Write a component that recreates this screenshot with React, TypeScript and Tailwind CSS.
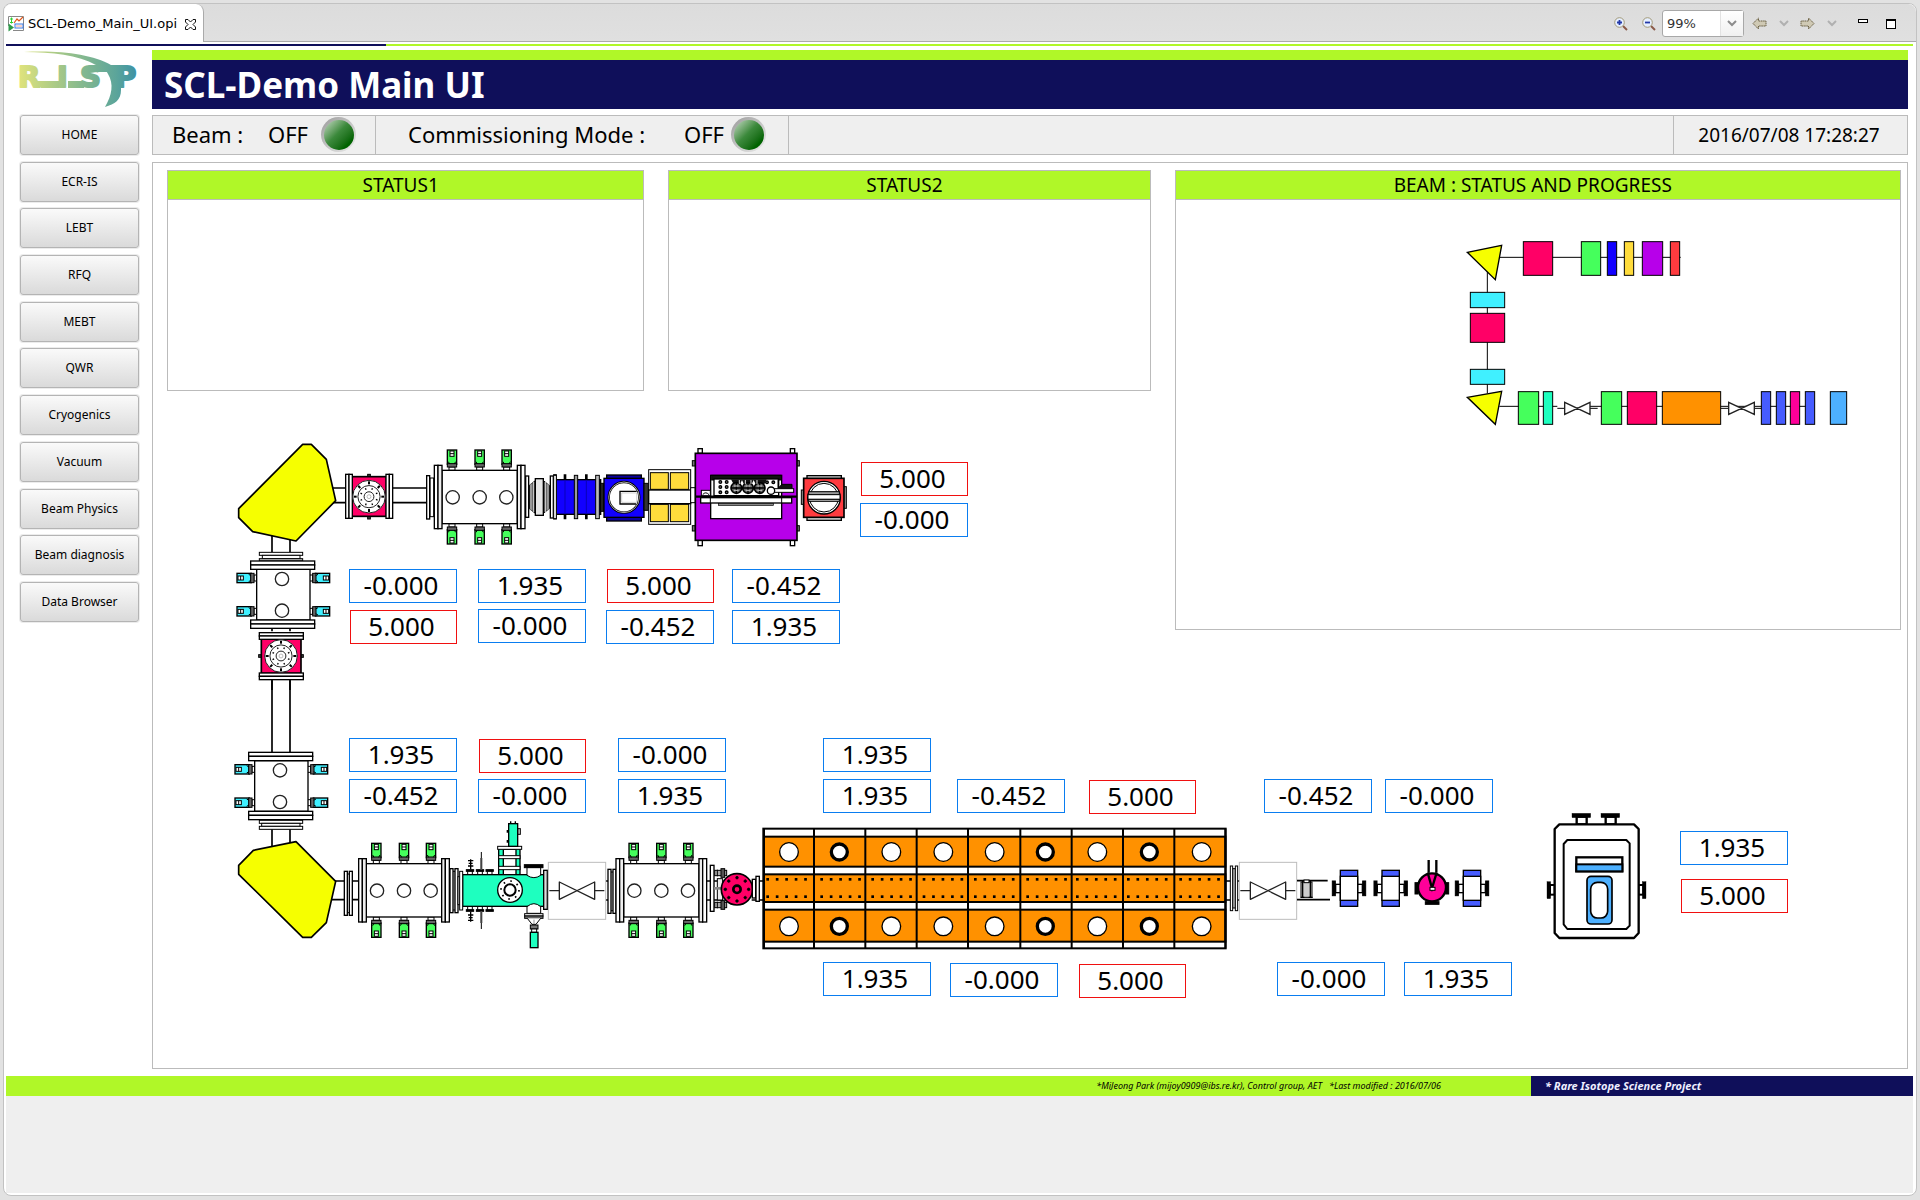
import React from "react";

const NAV = [
  "HOME",
  "ECR-IS",
  "LEBT",
  "RFQ",
  "MEBT",
  "QWR",
  "Cryogenics",
  "Vacuum",
  "Beam Physics",
  "Beam diagnosis",
  "Data Browser",
];

/* Origin of the synoptic drawing inside the page canvas */
const ORIGIN = { x: 167, y: 391 };

type Reading = { x: number; y: number; value: string; alarm?: boolean };

const READINGS: Reading[] = [
  { x: 861, y: 462, value: "5.000", alarm: true },
  { x: 860, y: 503, value: "-0.000" },
  { x: 349, y: 569, value: "-0.000" },
  { x: 478, y: 569, value: "1.935" },
  { x: 607, y: 569, value: "5.000", alarm: true },
  { x: 732, y: 569, value: "-0.452" },
  { x: 350, y: 610, value: "5.000", alarm: true },
  { x: 478, y: 609, value: "-0.000" },
  { x: 606, y: 610, value: "-0.452" },
  { x: 732, y: 610, value: "1.935" },
  { x: 349, y: 738, value: "1.935" },
  { x: 479, y: 739, value: "5.000", alarm: true },
  { x: 618, y: 738, value: "-0.000" },
  { x: 823, y: 738, value: "1.935" },
  { x: 349, y: 779, value: "-0.452" },
  { x: 478, y: 779, value: "-0.000" },
  { x: 618, y: 779, value: "1.935" },
  { x: 823, y: 779, value: "1.935" },
  { x: 957, y: 779, value: "-0.452" },
  { x: 1089, y: 780, value: "5.000", alarm: true },
  { x: 1264, y: 779, value: "-0.452" },
  { x: 1385, y: 779, value: "-0.000" },
  { x: 1680, y: 831, value: "1.935" },
  { x: 1681, y: 879, value: "5.000", alarm: true },
  { x: 823, y: 962, value: "1.935" },
  { x: 950, y: 963, value: "-0.000" },
  { x: 1079, y: 964, value: "5.000", alarm: true },
  { x: 1277, y: 962, value: "-0.000" },
  { x: 1404, y: 962, value: "1.935" },
];

/* ---------- drawing helpers: boxes are given by their two corners ---------- */

function Box({ p, f = "#fff", s = 3, c = "#000", r = 0 }: { p: number[]; f?: string; s?: number; c?: string; r?: number }) {
  return <rect x={p[0]} y={p[1]} width={p[2] - p[0]} height={p[3] - p[1]} fill={f} stroke={c} strokeWidth={s} rx={r} />;
}

function Sector({ x, y, children }: { x: number; y: number; children: React.ReactNode }) {
  return (
    <g transform={`translate(${x} ${y}) scale(0.33333)`} stroke="#000" strokeWidth={3}>
      {children}
    </g>
  );
}

function Motor({ x, y, angle, color }: { x: number; y: number; angle: number; color: string }) {
  return (
    <g transform={`translate(${x} ${y}) rotate(${angle})`}>
      <Box p={[-9, -10, 9, 0]} />
      <Box p={[-14, -61, 14, -18]} f={color} s={4} />
      <Box p={[-14, -20, 14, -10]} f="#666" />
      <path d="M-11 -26L-7 -19M11 -26L7 -19" />
      <Box p={[-6, -58, 6, -42]} s={3} />
      <path d="M-6 -50H6" />
    </g>
  );
}

function Chamber({ x, y }: { x: number; y: number }) {
  return (
    <g transform={`translate(${x} ${y})`}>
      {[-83, 0, 81].map((dx) => (
        <g key={dx}>
          <Motor x={dx} y={-80} angle={0} color="#45ff5c" />
          <Motor x={dx} y={80} angle={180} color="#45ff5c" />
        </g>
      ))}
      <Box p={[-113, -80, 113, 80]} s={4} />
      <Box p={[-136, -95, -125, 95]} s={4} />
      <Box p={[-125, -95, -113, 95]} f="#eee" s={4} />
      <Box p={[113, -95, 124, 95]} f="#eee" s={4} />
      <Box p={[124, -95, 136, 95]} s={4} />
      {[-81, 0, 80].map((dx) => (
        <circle key={dx} cx={dx} cy={1} r={20} fill="#fff" stroke="#222" strokeWidth={4} />
      ))}
    </g>
  );
}

function VerticalChamber({ x, y }: { x: number; y: number }) {
  return (
    <g transform={`translate(${x} ${y})`}>
      {[-50, 50].map((dy) => (
        <g key={dy}>
          <Motor x={-78} y={dy} angle={-90} color="#40f0ff" />
          <Motor x={78} y={dy} angle={90} color="#40f0ff" />
        </g>
      ))}
      <Box p={[-80, -76, 80, 76]} s={4} />
      <Box p={[-98, -101, 94, -89]} s={4} />
      <Box p={[-98, -89, 94, -76]} s={4} />
      <Box p={[-98, 76, 94, 88]} s={4} />
      <Box p={[-98, 88, 94, 101]} s={4} />
      <circle cx={-4} cy={-47} r={20} fill="#fff" stroke="#222" strokeWidth={4} />
      <circle cx={-4} cy={48} r={20} fill="#fff" stroke="#222" strokeWidth={4} />
    </g>
  );
}

function Dial({ r }: { r: number }) {
  return (
    <g>
      <circle r={r} fill="#fff" stroke="#222" strokeWidth={3} />
      <circle r={r * 0.68} fill="none" stroke="#222" strokeWidth={3} />
      <circle r={r * 0.3} fill="none" stroke="#222" strokeWidth={3} />
      <circle r={r * 0.12} fill="none" stroke="#999" strokeWidth={2} />
      {[0, 45, 90, 135, 180, 225, 270, 315].map((a) => (
        <g key={a} transform={`rotate(${a})`}>
          <path d={`M0 ${-r + 3}V${-r + 12}`} strokeWidth={6} />
          <path d={`M0 ${-r * 0.5 - 3}v5`} strokeWidth={4} transform="rotate(22)" />
        </g>
      ))}
    </g>
  );
}

function RedValve({ x, y, angle }: { x: number; y: number; angle: number }) {
  return (
    <g transform={`translate(${x} ${y}) rotate(${angle})`}>
      <Box p={[-4, -67, 4, 67]} f="#444" />
      <Box p={[-52, -60, 52, 59]} f="#ff0066" s={5} />
      <Box p={[-70, -67, -60, 65]} s={4} />
      <Box p={[-60, -67, -50, 65]} s={4} />
      <Box p={[51, -67, 61, 65]} s={4} />
      <Box p={[61, -67, 71, 65]} s={4} />
      <Dial r={49} />
    </g>
  );
}

function GateValve({ x, y }: { x: number; y: number }) {
  return (
    <g transform={`translate(${x} ${y})`}>
      <Box p={[-86, -85, 86, 86]} c="#bdbdbd" />
      <path d="M-83 0H-53M53 0H82M-53 -26V26L53 -26V26Z" fill="#fff" stroke="#222" strokeWidth={4} strokeLinejoin="round" />
    </g>
  );
}

function SmallFlange({ x, y }: { x: number; y: number }) {
  return (
    <g transform={`translate(${x} ${y})`}>
      <Box p={[-4, -58, 4, 58]} />
      <Box p={[-12, -66, -3, 66]} s={4} />
      <Box p={[3, -66, 12, 66]} s={4} />
    </g>
  );
}

function Quadrupole({ x }: { x: number }) {
  return (
    <g transform={`translate(${x} 295)`}>
      <Box p={[-50, -22, -41, 22]} f="#000" />
      <Box p={[41, -22, 50, 22]} f="#000" />
      <Box p={[-40, -12, 40, 13]} s={4} />
      <Box p={[-26, -54, 26, 54]} f="#465cff" s={4} />
      <Box p={[-26, -36, 26, 36]} s={4} />
    </g>
  );
}

function DriftModule() {
  const walls = [72, 222, 376, 530, 684, 841, 995, 1149, 1303, 1456];
  const holes = [147, 298, 454, 610, 764, 916, 1072, 1228, 1385];
  const rivets = [83, 245, 398, 552, 706, 863, 1012, 1165, 1322];
  return (
    <g>
      <Box p={[70, 86, 1457, 445]} s={6} />
      <Box p={[72, 110, 1456, 200]} f="#ff9100" s={6} />
      <Box p={[72, 223, 1456, 306]} f="#ff9100" s={6} />
      <Box p={[72, 329, 1456, 425]} f="#ff9100" s={6} />
      {walls.map((x) => (
        <path key={x} d={`M${x} 86V445`} strokeWidth={6} />
      ))}
      {holes.map((x, i) => {
        const thick = i === 1 || i === 5 || i === 7;
        return [156, 379].map((y) => (
          <circle key={`${x}-${y}`} cx={x} cy={y} r={thick ? 24 : 28} fill="#fff" strokeWidth={thick ? 10 : 4} />
        ));
      })}
      {rivets.map((x) =>
        [0, 1, 2, 3, 4].map((n) =>
          [234, 286].map((y) => (
            <rect key={`${x}-${n}-${y}`} x={x - 4 + n * 28.4} y={y} width={8} height={8} fill="#000" stroke="none" />
          )),
        ),
      )}
    </g>
  );
}

function Feedthroughs() {
  return (
    <g>
      {[750, 780, 809].map((x) => (
        <g key={x}>
          <Box p={[x - 7, 572, x + 7, 584]} />
          <Box p={[x - 11, 569, x + 11, 574]} f="#000" />
        </g>
      ))}
      <path d="M752 538V568M744 542H760M746 550H758M744 558H760" strokeWidth={4} />
      <path d="M784 516V570" strokeWidth={3} />
      <path d="M784 534V570" strokeWidth={6} stroke="#444" />
    </g>
  );
}

function Synoptic() {
  return (
    <svg className="block h-[670px] w-[1734px]" viewBox="167 391 1734 670" fill="none" aria-label="Beamline layout">
      {/* upper beamline: bend, valve, diagnostic chamber */}
      <Sector x={220} y={430}>
        <path d="M335 174H378M335 218H378M518 174H620M518 218H620M156 315V367M210 315V367M156 593V604M210 593V604M156 751V780M210 751V780" strokeWidth={5} />
        <path d="M248 43H274L319 88L347 212L228 333L98 305L56 263V236Z" fill="#f6ff00" strokeWidth={5} strokeLinejoin="round" />
        <RedValve x={447} y={200} angle={0} />
        <Box p={[630, 144, 641, 260]} />
        <Box p={[620, 137, 629, 267]} s={4} />
        <Chamber x={779} y={201} />
        <Box p={[917, 138, 926, 262]} s={4} />
        <path d="M928 166L946 152V250L928 236ZM988 166L970 152V250L988 236Z" fill="#555" />
        <path d="M933 160V242M940 156V246M977 156V246M984 160V242" stroke="#ddd" />
        <Box p={[946, 146, 970, 256]} f="#e6e6e6" s={4} />
        <Box p={[991, 138, 1000, 264]} s={4} />
        <Box p={[1001, 134, 1009, 267]} f="#999" />
        <Box p={[118, 367, 248, 376]} />
        <Box p={[127, 376, 240, 386]} />
        <Box p={[118, 386, 248, 393]} f="#bbb" />
        <VerticalChamber x={190} y={494} />
        <RedValve x={183} y={678} angle={90} />
      </Sector>

      {/* ion source side */}
      <Sector x={540} y={430}>
        <path d="M75 133V268M139 133V268" strokeWidth={8} />
        <Box p={[49, 149, 182, 253]} f="#1200ff" s={4} />
        <path d="M75 151V251M139 151V251" strokeWidth={3} stroke="#0a00b8" />
        <Box p={[41, 136, 49, 266]} />
        <Box p={[103, 136, 113, 266]} f="#999" />
        <Box p={[167, 136, 178, 266]} f="#bbb" />
        <Box p={[181, 160, 192, 244]} f="#222" />
        <Box p={[200, 135, 304, 273]} f="#0a00a0" s={4} />
        <Box p={[192, 145, 312, 262]} f="#1200ff" s={4} />
        <circle cx={252} cy={202} r={46} fill="#fff" strokeWidth={7} />
        <circle cx={252} cy={202} r={46} stroke="#aaa" strokeWidth={3} />
        <path d="M290 184H240V222H288" strokeWidth={4} />
        <path d="M245 189H290V217H245Z" stroke="#bbb" strokeWidth={2} />
        <Box p={[312, 160, 325, 241]} f="#333" />
        <Box p={[326, 119, 452, 283]} />
        <Box p={[331, 128, 385, 178]} f="#ffdc3c" />
        <Box p={[391, 128, 446, 178]} f="#ffdc3c" />
        <Box p={[331, 223, 385, 275]} f="#ffdc3c" />
        <Box p={[391, 223, 446, 275]} f="#ffdc3c" />
        <Box p={[326, 180, 452, 221]} s={4} />
        <Box p={[452, 173, 466, 218]} />
        {[474, 751].map((x) => (
          <g key={x}>
            <Box p={[x, 56, x + 13, 70]} s={4} />
            <Box p={[x, 331, x + 13, 347]} s={4} />
          </g>
        ))}
        {[457, 769].map((x) => (
          <g key={x}>
            <Box p={[x, 92, x + 9, 108]} f="#777" />
            <Box p={[x, 287, x + 9, 303]} f="#777" />
          </g>
        ))}
        <Box p={[466, 70, 771, 331]} f="#b700ea" s={5} />
        <Box p={[512, 136, 725, 266]} s={4} />
        <Box p={[515, 136, 722, 150]} f="#111" />
        <Box p={[522, 147, 716, 197]} s={4} />
        <path d="M573 148H680L672 165H648L641 150L634 165H613L606 150L599 165H582Z" fill="#111" stroke="none" />
        {[589, 624, 659].map((x) => (
          <g key={x}>
            <circle cx={x} cy={174} r={16} fill="#666" strokeWidth={5} />
            <path d={`M${x - 16} 174H${x + 16}M${x} 156V190`} strokeWidth={4} />
            <path d={`M${x - 7} 168h14M${x - 7} 181h14`} stroke="#ccc" strokeWidth={3} />
          </g>
        ))}
        <path d="M598 150V162M616 150V162M633 150V162M651 150V162" stroke="#ddd" />
        {[541, 560].map((x) => [156, 171, 187].map((y) => <circle key={`${x}${y}`} cx={x} cy={y} r={4} fill="#777" strokeWidth={4} />))}
        {[681, 700].map((x) => (
          <circle key={x} cx={x} cy={157} r={4} fill="#777" strokeWidth={4} />
        ))}
        <path d="M714 148V175L726 163H756V176H714" fill="#111" />
        <path d="M466 200H771" strokeWidth={7} />
        <Box p={[484, 181, 511, 197]} />
        <path d="M488 194Q497 183 507 194" />
        <Box p={[703, 176, 761, 187]} />
        <circle cx={693} cy={182} r={11} fill="#fff" strokeWidth={4} />
        <Box p={[482, 203, 755, 219]} s={4} />
        <path d="M511 203V219M725 203V219" />
        <Box p={[535, 220, 700, 226]} f="#888" s={2} />
        <Box p={[784, 180, 793, 223]} f="#999" />
        <Box p={[909, 170, 919, 235]} f="#999" />
        <Box p={[801, 137, 904, 271]} f="#ddd" s={4} />
        <Box p={[791, 145, 912, 262]} f="#ff3b3f" s={5} />
        <circle cx={852} cy={203} r={49} fill="#fff" strokeWidth={4} />
        <circle cx={852} cy={203} r={43} strokeWidth={3} />
        <Box p={[806, 185, 898, 194]} f="#999" />
        <Box p={[804, 194, 900, 208]} />
        <Box p={[806, 208, 898, 214]} f="#bbb" />
      </Sector>

      {/* lower-left return and stripper chamber */}
      <Sector x={220} y={680}>
        <path d="M156 0V216M210 0V216M156 448V500M210 448V500M334 603H417M334 659H417" strokeWidth={5} />
        <VerticalChamber x={184} y={318} />
        <Box p={[118, 421, 248, 430]} />
        <Box p={[125, 430, 240, 439]} />
        <Box p={[118, 439, 248, 448]} />
        <path d="M228 485L347 604L319 728L274 772H248L56 583V556L100 511Z" fill="#f6ff00" strokeWidth={5} strokeLinejoin="round" />
        <SmallFlange x={385} y={640} />
        <Chamber x={552} y={631} />
        <SmallFlange x={702} y={632} />
        <Box p={[714, 590, 720, 674]} />
        <Box p={[836, 506, 900, 584]} f="#1effbf" s={4} />
        <Box p={[850, 508, 888, 584]} s={4} />
        <Box p={[836, 527, 900, 536]} s={3} />
        <Box p={[836, 559, 900, 569]} s={3} />
        <Box p={[833, 499, 905, 508]} />
        <Box p={[893, 446, 901, 463]} f="#ccc" />
        <Box p={[866, 431, 893, 499]} f="#1effbf" s={4} />
        <path d="M872 424V431M886 424V431M862 450V458M862 480V488" strokeWidth={4} />
        <Feedthroughs />
        <g transform="translate(0 1263) scale(1 -1)">
          <Feedthroughs />
        </g>
        <Box p={[728, 584, 972, 679]} f="#1effbf" s={4} />
        <path d="M921 562H962V586Q942 600 921 586Z" fill="#fff" />
        <Box p={[913, 554, 969, 563]} f="#000" />
        <path d="M921 700V680Q942 662 962 680V700Z" fill="#fff" />
        <Box p={[914, 701, 969, 708]} />
        <Box p={[914, 708, 969, 715]} f="#777" />
        <path d="M922 715L936 733H948L962 715" fill="#fff" />
        <path d="M942 719V733" stroke="#999" />
        <Box p={[931, 735, 954, 747]} f="#777" />
        <Box p={[935, 747, 950, 757]} />
        <Box p={[931, 757, 954, 803]} f="#1effbf" s={4} />
        <Box p={[719, 574, 728, 690]} />
        <Box p={[971, 571, 982, 688]} f="#ddd" s={4} />
        <circle cx={870} cy={630} r={37} fill="#fff" strokeWidth={4} />
        <circle cx={870} cy={630} r={17} strokeWidth={6} />
        <circle cx={870} cy={630} r={27} strokeWidth={5} strokeDasharray="5 16.2" />
      </Sector>

      {/* gate valve, chamber and pump before the linac */}
      <Sector x={440} y={800}>
        <path d="M497 243H505M497 300H505M800 243H850M800 300H850M935 243H970M935 300H970" strokeWidth={5} />
        <GateValve x={411} y={272} />
        <SmallFlange x={516} y={274} />
        <Chamber x={664} y={271} />
        <Box p={[811, 196, 822, 334]} s={4} />
        {[219, 315].map((y) => (
          <g key={y}>
            <Box p={[824, y - 8, 860, y + 8]} f="#aaa" />
            <Box p={[843, y - 13, 854, y + 13]} f="#555" />
            <path d={`M832 ${y - 10}V${y + 10}`} />
          </g>
        ))}
        <Box p={[832, 236, 848, 300]} f="#eee" />
        <path d="M822 265H850" strokeWidth={8} stroke="#888" />
        <circle cx={891} cy={268} r={47} fill="#ff0066" strokeWidth={5} />
        {[0, 45, 90, 135, 180, 225, 270, 315].map((a) => (
          <circle key={a} cx={891} cy={233} r={4} fill="#000" stroke="#000" strokeWidth={2} transform={`rotate(${a} 891 268)`} />
        ))}
        <circle cx={891} cy={268} r={11} strokeWidth={8} />
        <Box p={[937, 238, 947, 294]} s={4} />
        <Box p={[948, 229, 958, 304]} s={4} />
      </Sector>

      {/* superconducting linac modules */}
      <Sector x={740} y={800}>
        <path d="M1458 243H1500M1458 300H1500" strokeWidth={5} />
        <DriftModule />
        <Box p={[1477, 206, 1488, 324]} f="#aaa" />
        <Box p={[1471, 198, 1478, 332]} />
        <Box p={[1486, 198, 1493, 332]} />
      </Sector>

      {/* downstream optics */}
      <Sector x={1220} y={790}>
        <GateValve x={144} y={302} />
        <path d="M231 272H323M231 329H330" strokeWidth={5} />
        <Box p={[243, 276, 276, 322]} f="#ccc" />
        <path d="M248 272V324M271 272V324M242 322H253M266 322H278" strokeWidth={4} />
        <Box p={[252, 270, 267, 278]} />
        <Quadrupole x={387} />
        <Quadrupole x={512} />
        <Quadrupole x={756} />
        <Box p={[585, 278, 594, 312]} f="#000" />
        <Box p={[677, 278, 686, 312]} f="#000" />
        <Box p={[616, 335, 657, 343]} f="#000" />
        <circle cx={636} cy={292} r={42} fill="#ff0099" strokeWidth={7} />
        <path d="M626 210V248M649 210V248" strokeWidth={7} />
        <path d="M623 248L636 294L650 248" strokeWidth={7} />
        <Box p={[630, 292, 645, 301]} />
      </Sector>

      {/* beam dump */}
      <Sector x={1520} y={790}>
        {[156, 243].map((x) => (
          <g key={x}>
            <Box p={[x + 14, 80, x + 44, 103]} s={7} />
            <Box p={[x, 70, x + 56, 83]} f="#000" s={1} />
          </g>
        ))}
        <Box p={[90, 285, 104, 314]} s={6} />
        <Box p={[355, 285, 370, 314]} s={6} />
        <Box p={[81, 275, 92, 326]} f="#000" s={1} />
        <Box p={[367, 275, 378, 326]} f="#000" s={1} />
        <path d="M118 103H342L356 117V429L342 444H118L104 429V117Z" fill="#fff" strokeWidth={7} strokeLinejoin="round" />
        <path d="M142 150H319L329 160V407L319 417H142L131 403V162Z" fill="#fff" strokeWidth={6} strokeLinejoin="round" />
        <Box p={[169, 202, 307, 244]} s={7} />
        <Box p={[169, 223, 307, 244]} f="#4db0ff" s={6} />
        <Box p={[201, 259, 276, 402]} f="#4db0ff" s={5} r={12} />
        <Box p={[212, 277, 263, 384]} s={5} r={20} />
      </Sector>
    </svg>
  );
}

function ProgressMap() {
  return (
    <svg className="block h-[429px] w-[724px]" viewBox="1176 200 724 429" fill="none" aria-label="Beam progress map">
      <Sector x={1440} y={220}>
        <path d="M142 150V520M180 112H722M178 559H352M450 559H1100M352 565H373M450 565H473M842 565H866M943 565H964" />
        <path d="M82 97L185 76L166 179Z" fill="#f6ff00" strokeWidth={4} />
        <path d="M82 532L185 514L166 613Z" fill="#f6ff00" strokeWidth={4} />
        <Box p={[250, 65, 338, 166]} f="#ff0066" />
        <Box p={[424, 65, 482, 166]} f="#45ff5c" />
        <Box p={[502, 65, 530, 166]} f="#1200ff" />
        <Box p={[553, 65, 581, 166]} f="#ffdc3c" />
        <Box p={[607, 65, 668, 166]} f="#b700ea" />
        <Box p={[691, 65, 719, 166]} f="#ff3b3f" />
        <Box p={[91, 217, 194, 263]} f="#40f0ff" />
        <Box p={[91, 280, 194, 367]} f="#ff0066" />
        <Box p={[91, 448, 194, 493]} f="#40f0ff" />
        <Box p={[235, 515, 296, 613]} f="#45ff5c" />
        <Box p={[310, 515, 338, 613]} f="#1effbf" />
        <path d="M374 547V583L450 547V583ZM866 547V583L943 547V583Z" fill="#fff" stroke="#222" strokeWidth={4} />
        <Box p={[484, 515, 545, 613]} f="#45ff5c" />
        <Box p={[562, 515, 650, 613]} f="#ff0066" />
        <Box p={[667, 515, 842, 613]} f="#ff9100" />
        <Box p={[964, 515, 992, 613]} f="#465cff" />
        <Box p={[1009, 515, 1037, 613]} f="#465cff" />
        <Box p={[1051, 515, 1079, 613]} f="#ff0099" />
        <Box p={[1096, 515, 1124, 613]} f="#465cff" />
        <Box p={[1171, 515, 1220, 613]} f="#4db0ff" />
      </Sector>
    </svg>
  );
}

function Led() {
  return (
    <span className="flex size-[35px] items-center justify-center rounded-full bg-linear-to-br from-[#9c9c9c] to-[#ececec]">
      <span className="size-[30px] rounded-full bg-linear-to-br from-[#c8dcc8] via-[#3c8a3c] via-45% to-[#006400] to-80%" />
    </span>
  );
}

function Logo() {
  return (
    <svg className="ml-[9px] h-[59px] w-[129px]" viewBox="15 50 129 59" role="img" aria-label="RISP">
      <defs>
        <linearGradient id="risp" gradientUnits="userSpaceOnUse" x1="19" y1="0" x2="140" y2="0">
          <stop offset="0" stopColor="#dfe37c" />
          <stop offset="0.5" stopColor="#88ba8e" />
          <stop offset="0.8" stopColor="#5ca59a" />
          <stop offset="1" stopColor="#388fa6" />
        </linearGradient>
      </defs>
      <g fill="url(#risp)">
        <text
          x="18 57 80 115"
          y="87"
          fontFamily="DejaVu Sans"
          fontWeight="700"
          fontSize="29"
          stroke="url(#risp)"
          strokeWidth="2"
          strokeLinejoin="round"
        >
          RISP
        </text>
        <path d="M36 81H59V88H41ZM68 81H84V88H68Z" />
        <path d="M84 73C80 66 90 64 108 65L114 72H98C92 72 90 74 84 73Z" />
        <path d="M24 52C58 50 92 54 111 65H121V90C121 100 115 104 105 107C112 95 114 84 108 74C106 70 102 68 96 65C78 55 52 52 24 52Z" />
      </g>
    </svg>
  );
}

function Panel({ title, className, children }: { title: string; className: string; children?: React.ReactNode }) {
  return (
    <section className={`min-w-0 border border-[#bbb] bg-white ${className}`}>
      <h2 className="h-[29px] border-b border-[#bbb] bg-[#b0f728] pr-[10px] text-center text-[19px] leading-[28px]">{title}</h2>
      {children}
    </section>
  );
}

function Magnifier({ plus }: { plus: boolean }) {
  return (
    <svg className="size-[14px]" viewBox="0 0 14 14" fill="none">
      <path d="M9 9L13 13" stroke="#8a5a48" strokeWidth="2" />
      <circle cx="5.5" cy="5.5" r="4.8" fill="#e6efff" stroke="#a39a78" />
      <path d={plus ? "M3 5.5H8M5.5 3V8" : "M3 5.5H8"} stroke="#2338a8" strokeWidth="1.8" />
    </svg>
  );
}

function HistoryArrow({ flip }: { flip?: boolean }) {
  return (
    <svg className={flip ? "h-[13px] w-[15px] -scale-x-100" : "h-[13px] w-[15px]"} viewBox="0 0 15 13">
      <path d="M1 6.5L6.5 1V4H14V9H6.5V12Z" fill="#cfc9b4" stroke="#6b6145" strokeDasharray="1.6 0.6" />
    </svg>
  );
}

function Chevron({ color }: { color: string }) {
  return (
    <svg width="10" height="7" viewBox="0 0 10 7" fill="none">
      <path d="M1 1L5 5L9 1" stroke={color} strokeWidth="2" />
    </svg>
  );
}

function TabBar() {
  return (
    <header className="flex h-[38px] rounded-t-lg bg-linear-to-b from-[#dcdcdc] to-[#e0e0e0]">
      <div className="flex w-[200px] items-center rounded-t-lg border-r border-[#aaa] bg-white pt-[2px] pl-[4px] font-['DejaVu_Sans'] text-[13px]">
        <svg className="size-[16px]" viewBox="0 0 16 16" fill="none">
          <path d="M2 .5H15.5V14.5H5M.5 10V.5H3" stroke="#888" />
          <path d="M6 7L9 3L11 5L15 1" stroke="#e0561a" strokeWidth="1.2" />
          <path d="M3.5 1.5V7.5M2 3H5M2 6.5H5" stroke="#2fd12f" />
          <rect x="7" y="8" width="8" height="4" stroke="#3a78e0" />
          <path d="M8.5 10H14" stroke="#e05030" strokeDasharray="1 1" />
          <path d="M.5 7.5L6 11.5L.5 15.5Z" fill="#2e9a4a" />
        </svg>
        <span className="ml-[4px] whitespace-nowrap">SCL-Demo_Main_UI.opi</span>
        <button type="button" aria-label="Close tab" className="ml-[8px]">
          <svg className="size-[11px]" viewBox="0 0 11 11" fill="none">
            <path d="M.5 .5H3L5.5 3L8 .5H10.5V3L8 5.5L10.5 8V10.5H8L5.5 8L3 10.5H.5V8L3 5.5L.5 3Z" stroke="#111" />
          </svg>
        </button>
      </div>
      <div className="flex flex-1 items-center justify-end border-b border-[#aaa] pt-[2px] pr-[20px]">
        <button type="button" aria-label="Zoom in"><Magnifier plus /></button>
        <button type="button" aria-label="Zoom out" className="ml-[14px]"><Magnifier plus={false} /></button>
        <div className="relative ml-[6px]">
          <select aria-label="Zoom level" defaultValue="99%" className="block h-[27px] w-[82px] appearance-none rounded-[3px] border border-[#a8a8a8] bg-white pl-[4px] font-['DejaVu_Sans'] text-[13px] text-[#333]">
            <option>99%</option>
          </select>
          <span className="pointer-events-none absolute top-[1px] right-[1px] flex h-[25px] w-[23px] items-center justify-center border-l border-[#e2e2e2] bg-linear-to-b from-white to-[#f0f0f0]">
            <Chevron color="#8c8c8c" />
          </span>
        </div>
        <button type="button" aria-label="Back" className="ml-[8px]"><HistoryArrow /></button>
        <button type="button" aria-label="Back history" className="ml-[12px]"><Chevron color="#b0b0b0" /></button>
        <button type="button" aria-label="Forward" className="ml-[11px]"><HistoryArrow flip /></button>
        <button type="button" aria-label="Forward history" className="ml-[12px]"><Chevron color="#b0b0b0" /></button>
        <button type="button" aria-label="Minimize" className="mb-[6px] ml-[21px] h-[4px] w-[10px] border border-black bg-white" />
        <button type="button" aria-label="Maximize" className="ml-[18px] h-[10px] w-[10px] border border-t-2 border-black bg-white" />
      </div>
    </header>
  );
}

export default function App() {
  return (
    <div className="min-h-screen bg-[#e2e2e2] p-[3px] pb-[4px] font-['Noto_Sans',sans-serif] text-black">
      <div className="flex min-h-[1193px] flex-col rounded-lg border border-[#c2c2c2] bg-white">
        <TabBar />
        <div className="mt-[2px] mr-[3px] mb-[2px] ml-[2px] flex flex-1 flex-col bg-[#efefef]">
          <div className="flex h-[2px]">
            <div className="w-[380px] bg-[#0f0f5a]" />
            <div className="flex-1 bg-[#b0f728]" />
          </div>
          <div className="flex bg-white pt-[4px] pb-[7px]">
            <aside className="flex w-[146px] shrink-0 flex-col">
              <Logo />
              <nav className="mt-[6px] ml-[14px] flex h-[507px] w-[119px] flex-col justify-between">
                {NAV.map((label) => (
                  <button
                    key={label}
                    type="button"
                    className="h-[40px] rounded-[3px] border border-[#b4b4b4] bg-linear-to-b from-[#fafafa] to-[#dadada] text-[12px] leading-[38px] shadow-[0_0_0_1px_#ececec]"
                  >
                    {label}
                  </button>
                ))}
              </nav>
            </aside>
            <main className="mr-[5px] flex-1">
              <h1 className="h-[59px] border-t-10 border-[#b0f728] bg-[#0f0f5a] pl-[12px] text-[35px] leading-[49px] font-bold text-white">
                SCL-Demo Main UI
              </h1>
              <div className="mt-[6px] flex h-[40px] items-center border border-[#bbb] bg-[#efefef] text-[22px]">
                <div className="flex h-full w-[223px] items-center border-r border-[#bbb] pb-[1px] pl-[19px]">
                  <span className="w-[96px]">Beam :</span>
                  <span className="w-[53px]">OFF</span>
                  <Led />
                </div>
                <div className="flex h-full w-[413px] items-center border-r border-[#bbb] pb-[1px] pl-[32px]">
                  <span className="w-[276px]">Commissioning Mode :</span>
                  <span className="w-[47px]">OFF</span>
                  <Led />
                </div>
                <div className="ml-auto flex h-full w-[234px] items-center justify-center border-l border-[#bbb] pt-[1px] pr-[3px] text-[19px]">
                  <time>2016/07/08 17:28:27</time>
                </div>
              </div>
              <div className="mt-[7px] grid grid-cols-[477fr_482fr_726fr] grid-rows-[221px_auto] gap-x-[24px] border border-[#bbb] bg-white pt-[7px] pr-[6px] pb-[7px] pl-[14px]">
                <Panel title="STATUS1" className="col-start-1 row-start-1" />
                <Panel title="STATUS2" className="col-start-2 row-start-1" />
                <div className="relative col-span-3 col-start-1 row-start-2 min-w-0">
                  <Synoptic />
                  {READINGS.map((r) => (
                    <output
                      key={`${r.x}-${r.y}`}
                      className={
                        r.alarm
                          ? "absolute h-[34px] w-[107px] border border-[#f01010] bg-white pr-[4px] text-center text-[26px] leading-[31px]"
                          : "absolute h-[34px] w-[108px] border border-[#0a7df0] bg-white pr-[4px] text-center text-[26px] leading-[31px]"
                      }
                      style={{ left: r.x - ORIGIN.x, top: r.y - ORIGIN.y }}
                    >
                      {r.value}
                    </output>
                  ))}
                </div>
                <Panel title="BEAM : STATUS AND PROGRESS" className="z-10 col-start-3 row-span-2 row-start-1 self-start overflow-hidden">
                  <ProgressMap />
                </Panel>
              </div>
            </main>
          </div>
          <footer className="flex h-[20px] items-center bg-[#b0f728] italic">
            <p className="flex-1 pr-[90px] text-right text-[9px] whitespace-pre">
              {"*MiJeong Park (mijoy0909@ibs.re.kr), Control group, AET   *Last modified : 2016/07/06"}
            </p>
            <p className="flex h-full w-[382px] items-center bg-[#0f0f5a] pl-[14px] text-[11px] font-bold text-[#eef]">* Rare Isotope Science Project</p>
          </footer>
        </div>
      </div>
    </div>
  );
}
